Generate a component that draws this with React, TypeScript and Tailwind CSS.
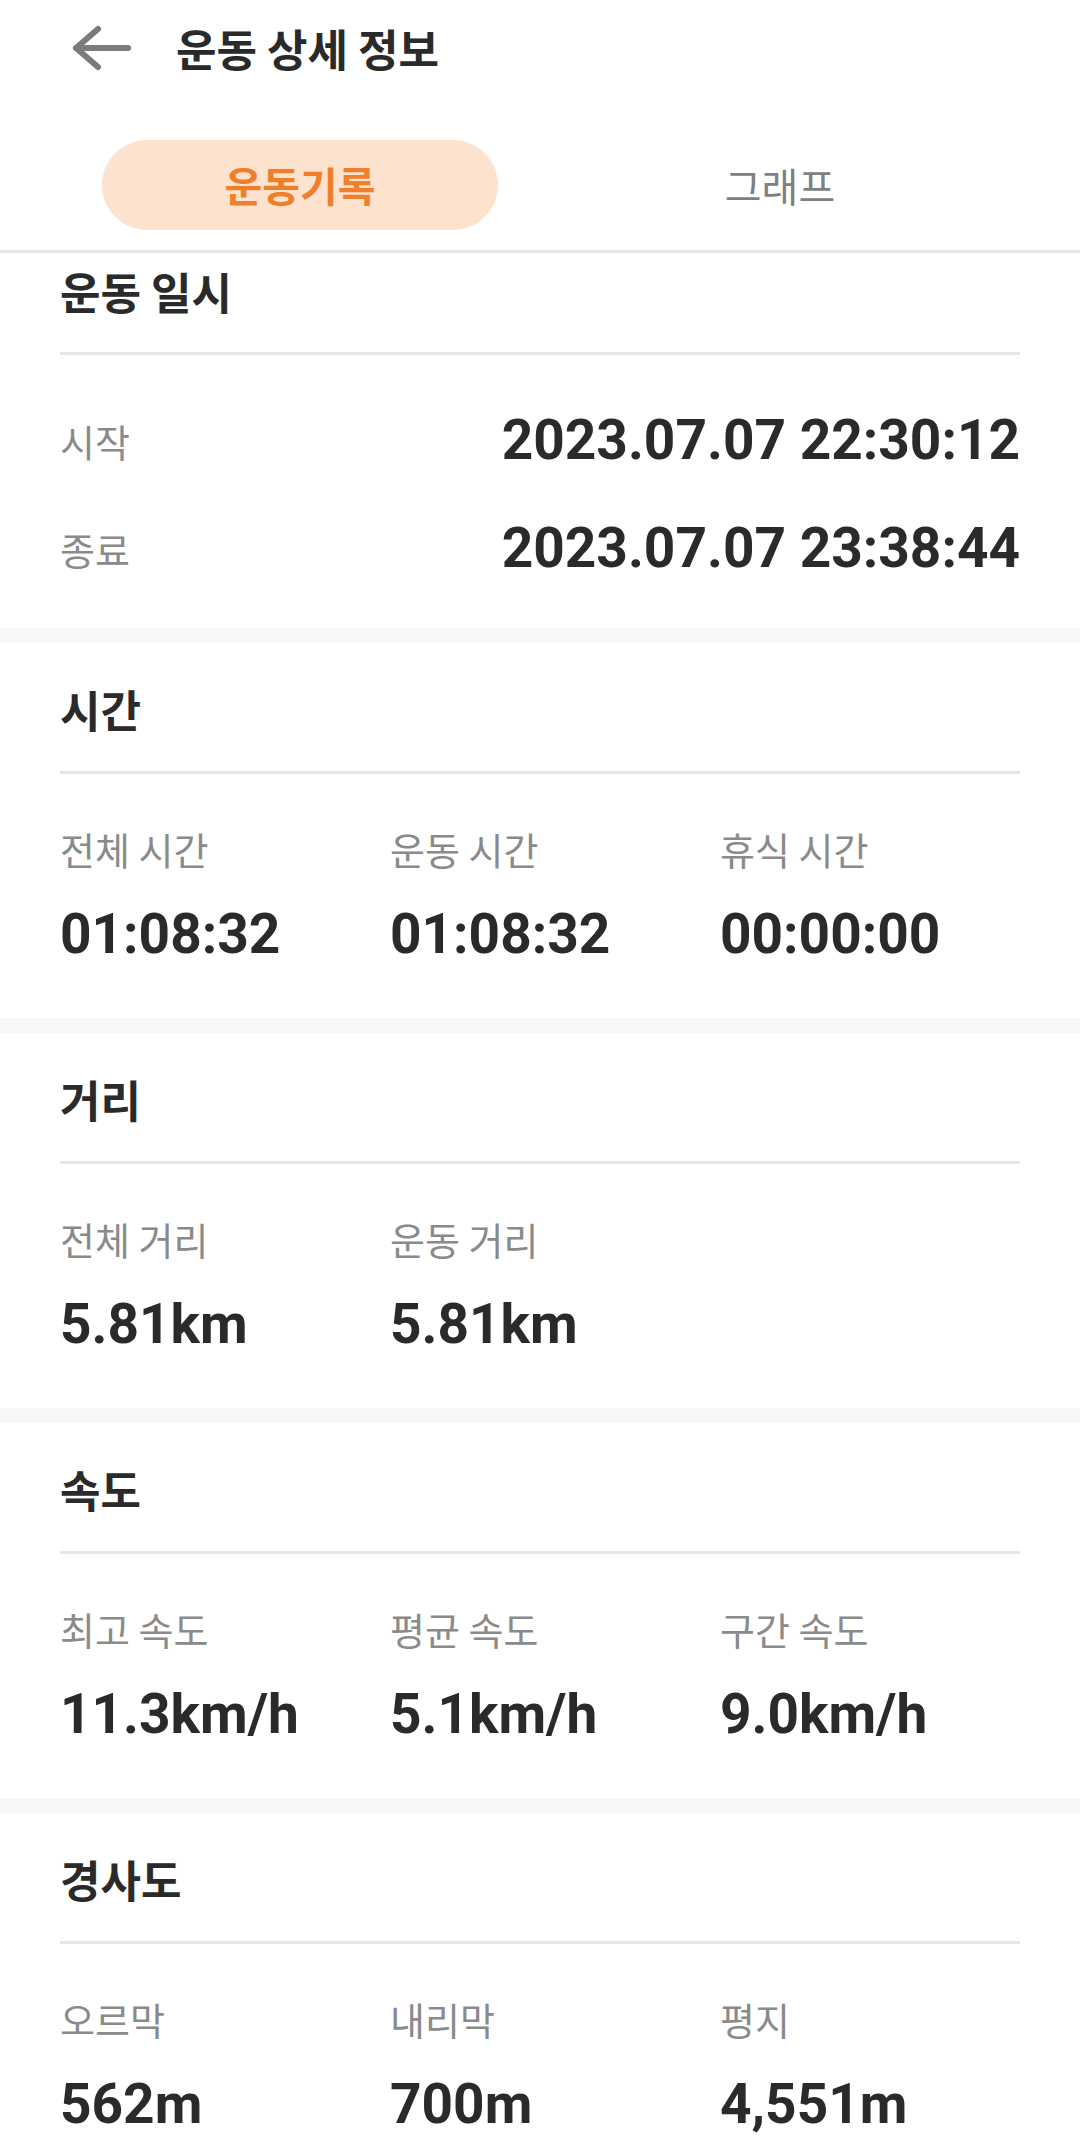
import React from "react";

const KR = { fontFamily: '"Noto Sans CJK KR", "Noto Sans", sans-serif' };
const NUM = { fontFamily: 'Roboto, "Noto Sans CJK KR", sans-serif' };

function Band() {
  return <div className="h-[15px] bg-[#f7f7f7]" />;
}

function Heading({ title, first }: { title: string; first?: boolean }) {
  return (
    <div className={first ? "h-[99px]" : "h-[128px] pt-[28px]"}>
      <div className="text-[44px] leading-[76px] font-bold text-[#2a2a2a]" style={KR}>
        {title}
      </div>
    </div>
  );
}

function Divider() {
  return <div className="h-[3px] bg-[#e6e6e6]" />;
}

function StatSection({ title, items }: { title: string; items: { label: string; value: string }[] }) {
  return (
    <div className="bg-white px-[60px] pb-[52px]">
      <Heading title={title} />
      <Divider />
      <div className="grid grid-cols-[330px_330px_1fr] mt-[53px]">
        {items.map((it) => (
          <div key={it.label} className="flex flex-col">
            <div className="text-[38px] leading-[44px] text-[#8a8a8a]" style={KR}>
              {it.label}
            </div>
            <div className="mt-[31px] text-[55px] leading-[64px] font-bold text-[#2a2a2a]" style={NUM}>
              {it.value}
            </div>
          </div>
        ))}
      </div>
    </div>
  );
}

export default function App() {
  return (
    <div className="w-[1080px] h-[2155px] overflow-hidden bg-white">
      {/* Header */}
      <div className="h-[96px] flex items-center">
        <svg width="70" height="60" viewBox="0 0 70 60" className="ml-[66px] shrink-0">
          <path
            d="M10 30 H62 M32 11 L10 30 L32 49"
            fill="none"
            stroke="#7b7b7b"
            strokeWidth="6"
            strokeLinecap="round"
            strokeLinejoin="round"
          />
        </svg>
        <div className="ml-[40px] text-[44px] font-bold text-[#2a2a2a] leading-none" style={KR}>
          운동 상세 정보
        </div>
      </div>

      {/* Tabs */}
      <div className="grid grid-cols-2 px-[60px] pt-[44px] pb-[20px]">
        <div className="mx-[42px] h-[90px] rounded-full bg-[#fde2cd] flex items-center justify-center">
          <span className="text-[41px] font-bold text-[#f07f2c]" style={KR}>
            운동기록
          </span>
        </div>
        <div className="h-[90px] flex items-center justify-center">
          <span className="text-[40px] text-[#7f7f7f]" style={KR}>
            그래프
          </span>
        </div>
      </div>
      <div className="h-[3px] bg-[#e6e6e6]" />

      {/* Section: 운동 일시 */}
      <div className="bg-white px-[60px] pb-[48px]">
        <Heading title="운동 일시" first />
        <Divider />
        <div className="mt-[53px] flex flex-col gap-[44px]">
          {[
            { label: "시작", value: "2023.07.07 22:30:12" },
            { label: "종료", value: "2023.07.07 23:38:44" },
          ].map((r) => (
            <div key={r.label} className="h-[64px] flex items-center justify-between">
              <span className="text-[38px] text-[#8a8a8a]" style={KR}>
                {r.label}
              </span>
              <span className="text-[55px] leading-[64px] font-bold text-[#2a2a2a]" style={NUM}>
                {r.value}
              </span>
            </div>
          ))}
        </div>
      </div>
      <Band />

      <StatSection
        title="시간"
        items={[
          { label: "전체 시간", value: "01:08:32" },
          { label: "운동 시간", value: "01:08:32" },
          { label: "휴식 시간", value: "00:00:00" },
        ]}
      />
      <Band />
      <StatSection
        title="거리"
        items={[
          { label: "전체 거리", value: "5.81km" },
          { label: "운동 거리", value: "5.81km" },
        ]}
      />
      <Band />
      <StatSection
        title="속도"
        items={[
          { label: "최고 속도", value: "11.3km/h" },
          { label: "평균 속도", value: "5.1km/h" },
          { label: "구간 속도", value: "9.0km/h" },
        ]}
      />
      <Band />
      <StatSection
        title="경사도"
        items={[
          { label: "오르막", value: "562m" },
          { label: "내리막", value: "700m" },
          { label: "평지", value: "4,551m" },
        ]}
      />
    </div>
  );
}
